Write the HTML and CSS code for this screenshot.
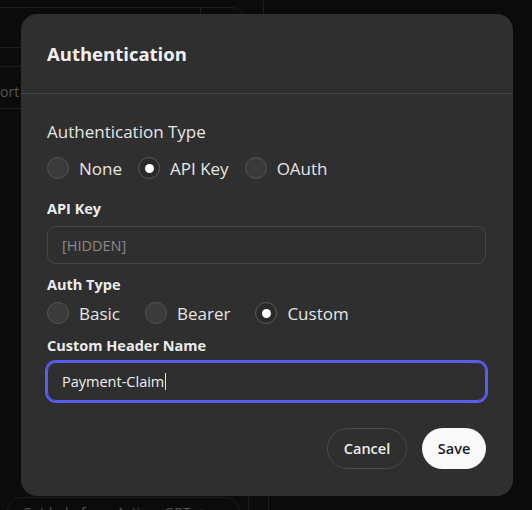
FILE: index.html
```html
<!DOCTYPE html>
<html>
<head>
<meta charset="utf-8">
<link rel="stylesheet" href="styles.css">
</head>
<body>
<div class="page">
  <div class="bg-card bg-card-top"></div>
  <div class="bg-vline bg-vline-a"></div>
  <div class="bg-vline bg-vline-b"></div>
  <div class="bg-hline bg-hline-a"></div>
  <div class="bg-hline bg-hline-b"></div>
  <div class="bg-text bg-text-ort">ort</div>
  <div class="bg-help">Get help from ActionsGPT ↗</div>
  <div class="bg-vline bg-vline-c"></div>
  <div class="bg-vline bg-vline-d"></div>
</div>

<div class="modal">
  <div class="modal-header">
    <h2 class="modal-title">Authentication</h2>
  </div>
  <div class="modal-body">
    <div class="section-label">Authentication Type</div>
    <div class="radio-row radio-row-tight">
      <label class="radio"><span class="dot"></span><span>None</span></label>
      <label class="radio"><span class="dot checked"></span><span>API Key</span></label>
      <label class="radio"><span class="dot"></span><span>OAuth</span></label>
    </div>

    <div class="field-label label-apikey">API Key</div>
    <div class="input input-muted">[HIDDEN]</div>

    <div class="field-label label-authtype">Auth Type</div>
    <div class="radio-row radio-row-wide">
      <label class="radio"><span class="dot"></span><span>Basic</span></label>
      <label class="radio"><span class="dot"></span><span>Bearer</span></label>
      <label class="radio"><span class="dot checked"></span><span>Custom</span></label>
    </div>

    <div class="field-label label-header">Custom Header Name</div>
    <div class="input input-focus"><span>Payment-Claim</span><span class="caret"></span></div>

    <div class="actions">
      <button class="btn btn-secondary">Cancel</button>
      <button class="btn btn-primary">Save</button>
    </div>
  </div>
</div>
</body>
</html>
```

FILE: styles.css
```css
* { box-sizing: border-box; }
html, body {
  margin: 0;
  padding: 0;
  width: 532px;
  height: 510px;
  overflow: hidden;
  background: #0b0b0b;
  font-family: "Open Sans", "Noto Sans", sans-serif;
  color: #ececec;
}
.page {
  position: relative;
  width: 532px;
  height: 510px;
}
.bg-card {
  position: absolute;
  border: 1px solid #1c1c1c;
  border-radius: 12px;
}
.bg-card-top {
  left: -20px;
  top: 7px;
  width: 264px;
  height: 60px;
}
.bg-vline {
  position: absolute;
  width: 1px;
  background: #1c1c1c;
}
.bg-vline-a { left: 200px; top: 7px; height: 10px; }
.bg-vline-b { left: 263px; top: 0; height: 14px; }
.bg-vline-c { left: 248px; top: 496px; height: 14px; }
.bg-vline-d { left: 268px; top: 496px; height: 14px; }
.bg-hline {
  position: absolute;
  height: 1px;
  background: #1c1c1c;
  left: 0;
  width: 21px;
}
.bg-hline-a { top: 47px; }
.bg-hline-b { top: 108px; }
.bg-text {
  position: absolute;
  font-size: 14px;
  color: #555;
}
.bg-text-ort { left: 0; top: 82px; }
.bg-help {
  position: absolute;
  left: 7px;
  top: 497px;
  width: 233px;
  height: 30px;
  border: 1px solid #1c1c1c;
  border-radius: 14px;
  padding: 5px 0 0 14px;
  font-size: 14px;
  color: #555;
}

.modal {
  position: absolute;
  left: 21px;
  top: 14px;
  width: 492px;
  height: 482px;
  background: #2f2f2f;
  border-radius: 16px;
  display: flex;
  flex-direction: column;
}
.modal-header {
  height: 80px;
  padding: 0 26px;
  display: flex;
  align-items: center;
  border-bottom: 1px solid #464646;
}
.modal-title {
  margin: 0;
  font-size: 18.5px;
  font-weight: 700;
  color: #f2f2f2;
}
.modal-body {
  padding: 26px 27px 0 26px;
  display: flex;
  flex-direction: column;
}
.section-label {
  font-size: 17px;
  line-height: 24px;
  color: #e6e6e6;
}
.radio-row {
  display: flex;
  align-items: center;
  height: 24px;
  margin-top: 12px;
}
.radio-row-tight { gap: 16px; }
.radio-row-wide { gap: 25px; margin-top: 6px; }
.radio {
  display: flex;
  align-items: center;
  gap: 10px;
  font-size: 17px;
  color: #e6e6e6;
}
.dot {
  width: 22px;
  height: 22px;
  border-radius: 50%;
  background: #3b3b3b;
  border: 1px solid #545454;
  display: flex;
  align-items: center;
  justify-content: center;
}
.dot.checked {
  background: #2a2a2a;
  border: 1px solid #5a5a5a;
}
.dot.checked::after {
  content: "";
  width: 9px;
  height: 9px;
  border-radius: 50%;
  background: #ffffff;
}
.field-label {
  font-size: 14.5px;
  font-weight: 700;
  line-height: 20px;
  color: #ececec;
}
.label-apikey { margin-top: 19px; }
.label-authtype { margin-top: 11px; }
.label-header { margin-top: 11px; }
.input {
  margin-top: 7px;
  height: 38px;
  border-radius: 9px;
  border: 1px solid #474747;
  padding: 0 14px;
  display: flex;
  align-items: center;
  font-size: 14.5px;
}
.input-muted { color: #8a8a8a; }
.input-focus {
  margin-top: 6px;
  height: 39px;
  border: 1px solid #5b5cf0;
  box-shadow: 0 0 0 2px #5b5cf0;
  color: #f0f0f0;
}
.caret {
  display: inline-block;
  width: 1px;
  height: 17px;
  background: #e0e0e0;
  margin-left: 1px;
}
.actions {
  margin-top: 27px;
  display: flex;
  justify-content: flex-end;
  gap: 15px;
}
.btn {
  height: 41px;
  border-radius: 21px;
  font-family: inherit;
  font-size: 14.5px;
  font-weight: 600;
  padding: 0;
}
.btn-secondary {
  width: 80px;
  background: transparent;
  border: 1px solid #4a4a4a;
  color: #ececec;
}
.btn-primary {
  width: 64px;
  background: #f9f9f9;
  border: none;
  color: #1a1a1a;
}
```
